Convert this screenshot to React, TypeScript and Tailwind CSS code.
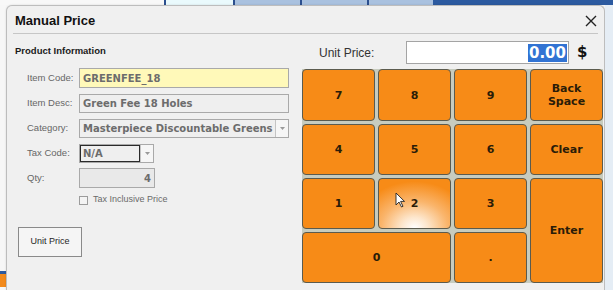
import React from 'react';

const keyBase =
  'flex items-center justify-center text-center leading-[13px] rounded-[4px] border-[1.5px] border-[#5b5b4e] bg-[#f78b17] text-[11px] font-bold text-[#2a1c08] font-["DejaVu_Sans",sans-serif]';

function Key({ label, className = '' }: { label: React.ReactNode; className?: string }) {
  return <div className={`${keyBase} ${className}`}>{label}</div>;
}

function FieldRow({ label, children }: { label: string; children: React.ReactNode }) {
  return (
    <div className="flex items-center h-[20px]">
      <div className="w-[52px] ml-[12px] text-[9.5px] text-[#666]">{label}</div>
      {children}
    </div>
  );
}

function Arrow() {
  return (
    <div className="w-[13px] h-full border-l border-[#c4c4c4] bg-[#f6f6f6] flex items-center justify-center">
      <svg width="5" height="3" viewBox="0 0 5 3">
        <path d="M0 0 L5 0 L2.5 3 Z" fill="#9a9a9a" />
      </svg>
    </div>
  );
}

export default function App() {
  const fieldText = 'font-["DejaVu_Sans",sans-serif] font-bold text-[10px] text-[#6c6c6c]';

  return (
    <div className='w-[613px] h-[290px] overflow-hidden flex flex-col bg-[#f6f6f6] font-["Liberation_Sans",Arial,sans-serif]'>
      {/* app behind the dialog */}
      <div className="h-[5px] flex shrink-0">
        <div className="w-[164px] bg-[#f8f8f8]" />
        <div className="w-[2px] bg-[#2b4f8f]" />
        <div className="w-[67px] bg-[#eafafd]" />
        <div className="w-[2px] bg-[#2b4f8f]" />
        <div className="w-[65px] bg-[#a9c1df]" />
        <div className="w-[2px] bg-[#2b4f8f]" />
        <div className="w-[65px] bg-[#a9c1df]" />
        <div className="w-[2px] bg-[#2b4f8f]" />
        <div className="w-[64px] bg-[#a9c1df]" />
        <div className="flex-1 bg-[#2c5aa0]" />
      </div>

      <div className="flex flex-1 min-h-0">
        <div className="w-[6px] flex flex-col">
          <div className="h-[266px] bg-[#f7f7f7]" />
          <div className="h-[3px] bg-[#2c5aa0]" />
          <div className="h-[13px] bg-[#f28a1c]" />
          <div className="flex-1 bg-[#f7f7f7]" />
        </div>

        {/* dialog */}
        <div className="w-[599px] flex flex-col bg-[#f0f0f0] border border-[#bdbdbd] border-b-0 rounded-t-[6px] shadow-[0_0_2px_rgba(0,0,0,0.15)]">
          <div className="h-[27px] flex items-center justify-between pl-[8px] pr-[7px] shrink-0">
            <div className="text-[13px] font-bold text-[#111] mt-[2px]">Manual Price</div>
            <svg width="12" height="12" viewBox="0 0 12 12" className="mt-[3px]">
              <path d="M1 1 L11 11 M11 1 L1 11" stroke="#222" strokeWidth="1.4" />
            </svg>
          </div>
          <div className="mx-[6px] h-px bg-[#c6c6c6] shrink-0" />

          <div className="flex flex-1">
            {/* left: product information */}
            <div className="w-[293px] pl-[8px] pt-[11px] flex flex-col">
              <div className="text-[9.5px] font-bold text-[#1a1a1a] h-[12px] leading-[12px]">Product Information</div>
              <div className="flex flex-col gap-[5px] mt-[11px]">
                <FieldRow label="Item Code:">
                  <div className={`w-[210px] h-[20px] border border-[#a9a9a9] bg-[#fff9b9] px-[3px] flex items-center ${fieldText} text-[10.5px]`}>
                    GREENFEE_18
                  </div>
                </FieldRow>
                <FieldRow label="Item Desc:">
                  <div className={`w-[210px] h-[19px] border border-[#a9a9a9] bg-[#efefef] px-[3px] flex items-center ${fieldText}`}>
                    Green Fee 18 Holes
                  </div>
                </FieldRow>
                <FieldRow label="Category:">
                  <div className={`w-[210px] h-[19px] border border-[#a9a9a9] bg-[#efefef] flex items-center ${fieldText}`}>
                    <div className="flex-1 px-[3px] whitespace-nowrap overflow-hidden">Masterpiece Discountable Greens</div>
                    <Arrow />
                  </div>
                </FieldRow>
                <FieldRow label="Tax Code:">
                  <div className={`w-[75px] h-[19px] border border-[#a9a9a9] bg-[#efefef] flex items-center ${fieldText}`}>
                    <div className="flex-1 h-full px-[2px] flex items-center border border-[#2a2a2a]">N/A</div>
                    <Arrow />
                  </div>
                </FieldRow>
                <FieldRow label="Qty:">
                  <div className={`w-[76px] h-[20px] border border-[#a9a9a9] bg-[#e9e9e9] px-[3px] flex items-center justify-end ${fieldText}`}>
                    4
                  </div>
                </FieldRow>
              </div>
              <div className="flex items-center ml-[64px] mt-[6px] h-[12px]">
                <div className="w-[9px] h-[9px] border border-[#9c9c9c] bg-[#f4f4f4]" />
                <div className="ml-[5px] text-[9px] text-[#6a6a6a]">Tax Inclusive Price</div>
              </div>
              <div className="mt-[21px] ml-[3px] w-[64px] h-[30px] border border-[#8a8a8a] bg-[#f5f5f5] flex items-center justify-center text-[9px] text-[#262626]">
                Unit Price
              </div>
            </div>

            {/* right: keypad */}
            <div className="flex-1 pt-[7px] pl-[2px] flex flex-col">
              <div className="flex items-center h-[23px]">
                <div className="w-[104px] pl-[17px] text-[12px] text-[#333]">Unit Price:</div>
                <div className="w-[163px] h-[23px] border border-[#a4a4a4] bg-white flex items-center justify-end pr-[1px]">
                  <span className='bg-[#3173d3] text-white font-bold text-[15px] leading-[18px] px-[1px] font-["DejaVu_Sans",sans-serif]'>0.00</span>
                </div>
                <div className='ml-[8px] text-[15px] font-bold text-[#111] font-["DejaVu_Sans",sans-serif]'>$</div>
              </div>

              <div className="mt-[5px] w-[301px] grid grid-cols-4 grid-rows-[52px_51px_51px_51px] gap-[3px] bg-[#c7ccbf]">
                <Key label="7" />
                <Key label="8" />
                <Key label="9" />
                <Key label={<span>Back<br />Space</span>} />
                <Key label="4" />
                <Key label="5" />
                <Key label="6" />
                <Key label="Clear" />
                <Key label="1" />
                <div className={`${keyBase} relative bg-[radial-gradient(ellipse_85%_100%_at_50%_100%,#ffffff_0%,#fde6cc_22%,#fab56c_55%,#f78b17_95%)]`}>
                  2
                  <svg width="10" height="16" viewBox="0 0 10 16" className="absolute left-[16px] top-[13px]">
                    <path d="M1 1 L1 13 L4 10 L6.5 15 L8 14.3 L5.6 9.4 L9.5 9.4 Z" fill="#fff" stroke="#222" strokeWidth="0.9" strokeLinejoin="round" />
                  </svg>
                </div>
                <Key label="3" />
                <Key label="Enter" className="row-span-2" />
                <Key label="0" className="col-span-2" />
                <Key label="." />
              </div>
            </div>
          </div>
        </div>

        <div className="flex-1 bg-[#e5edf5]" />
      </div>
    </div>
  );
}
